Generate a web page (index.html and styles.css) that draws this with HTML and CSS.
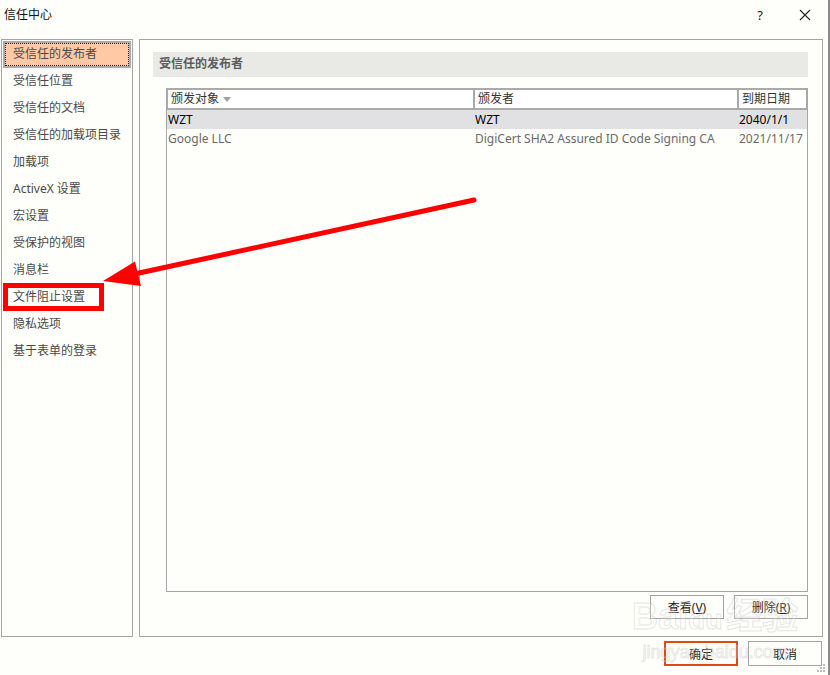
FILE: index.html
```html
<!DOCTYPE html>
<html lang="zh-CN">
<head>
    <meta charset="UTF-8">
    <meta name="viewport" content="width=device-width, initial-scale=1.0">
    <title>信任中心</title>
    <link rel="stylesheet" href="styles.css">
</head>
<body>
    <div class="window">
        <div class="titlebar">
            <span class="title">信任中心</span>
            <div class="caption-btns">
                <span class="help">?</span>
                <svg class="close" width="12" height="12" viewBox="0 0 12 12">
                    <path d="M1 1 L11 11 M11 1 L1 11" stroke="#222" stroke-width="1.1" fill="none"/>
                </svg>
            </div>
        </div>

        <div class="content">
            <nav class="nav">
                <div class="nav-item active">受信任的发布者</div>
                <div class="nav-item">受信任位置</div>
                <div class="nav-item">受信任的文档</div>
                <div class="nav-item">受信任的加载项目录</div>
                <div class="nav-item">加载项</div>
                <div class="nav-item">ActiveX 设置</div>
                <div class="nav-item">宏设置</div>
                <div class="nav-item">受保护的视图</div>
                <div class="nav-item">消息栏</div>
                <div class="nav-item">文件阻止设置</div>
                <div class="nav-item">隐私选项</div>
                <div class="nav-item">基于表单的登录</div>
            </nav>

            <section class="pane">
                <h2 class="pane-head">受信任的发布者</h2>
                <div class="cert-table">
                    <div class="cert-head">
                        <div class="th">颁发对象 <span class="caret"></span></div>
                        <div class="th">颁发者</div>
                        <div class="th">到期日期</div>
                    </div>
                    <div class="cert-row selected">
                        <div class="td">WZT</div>
                        <div class="td">WZT</div>
                        <div class="td">2040/1/1</div>
                    </div>
                    <div class="cert-row">
                        <div class="td">Google LLC</div>
                        <div class="td">DigiCert SHA2 Assured ID Code Signing CA</div>
                        <div class="td">2021/11/17</div>
                    </div>
                </div>
                <div class="pane-actions">
                    <button class="btn">查看(<u>V</u>)</button>
                    <button class="btn">删除(<u>R</u>)</button>
                </div>
            </section>
        </div>

        <div class="footer">
            <button class="btn btn-default">确定</button>
            <button class="btn">取消</button>
        </div>

        <svg class="grip" width="8" height="8" viewBox="0 0 8 8">
            <rect x="6" y="0" width="2" height="2" fill="#bbb"/>
            <rect x="3" y="3" width="2" height="2" fill="#bbb"/>
            <rect x="6" y="3" width="2" height="2" fill="#bbb"/>
            <rect x="0" y="6" width="2" height="2" fill="#bbb"/>
            <rect x="3" y="6" width="2" height="2" fill="#bbb"/>
            <rect x="6" y="6" width="2" height="2" fill="#bbb"/>
        </svg>

        <div class="watermark">
            <span class="wm-big">Bai<span class="wm-du">du</span>经验</span>
            <span class="wm-small">jingyan.baidu.com</span>
        </div>

        <!-- red annotation drawn over the dialog -->
        <svg class="annot" width="830" height="675" viewBox="0 0 830 675">
            <rect x="5.5" y="285.5" width="96" height="23" fill="none" stroke="#f00" stroke-width="5"/>
            <line x1="474" y1="200" x2="130" y2="275" stroke="#f00" stroke-width="5" stroke-linecap="round"/>
            <polygon points="103,281 135,261.5 141,286" fill="#f00"/>
        </svg>
    </div>
</body>
</html>
```

FILE: styles.css
```css
body {
    margin: 0;
    background: #fefefa;
    font-family: "Noto Sans", "Noto Sans CJK SC", sans-serif;
    font-size: 12px;
    color: #222;
}
.window {
    position: relative;
    width: 830px;
    height: 675px;
    box-sizing: border-box;
    border-right: 2px solid #8c8c8c;
    overflow: hidden;
}
.titlebar {
    display: flex;
    justify-content: space-between;
    height: 39px;
}
.title {
    padding-left: 4px;
    line-height: 30px;
    color: #111;
}
.caption-btns {
    display: flex;
    align-items: center;
    gap: 36px;
    height: 30px;
    padding-right: 17px;
}
.help {
    font-size: 13px;
    color: #222;
}
.content {
    display: flex;
    gap: 6px;
    height: 598px;
    padding-left: 1px;
}
.nav {
    width: 132px;
    box-sizing: border-box;
    border: 1px solid #a4a4a0;
    padding: 1px;
}
.nav-item {
    height: 27px;
    line-height: 26px;
    padding-left: 10px;
    color: #4a4a4a;
}
.nav-item.active {
    background: #ffc9a6;
    box-shadow: inset 0 0 0 2px #ababab;
    outline: 1px dotted #222;
    outline-offset: -3px;
}
.pane {
    width: 684px;
    box-sizing: border-box;
    border: 1px solid #a4a4a0;
    padding: 12px 14px 0 13px;
}
.pane-head {
    margin: 0;
    height: 25px;
    line-height: 24px;
    padding-left: 6px;
    background: #e9e9e6;
    font-size: 12px;
    font-weight: bold;
    color: #5c5c5c;
}
.cert-table {
    width: 642px;
    height: 504px;
    box-sizing: border-box;
    margin: 11px 0 0 13px;
    border: 1px solid #a6a6a6;
    border-top: none;
}
.cert-head {
    display: grid;
    grid-template-columns: 305px 262px 67px;
    gap: 2px;
    padding: 2px 0 2px 1px;
    background: #aaaaaa;
}
.th {
    background: #fff;
    height: 18px;
    line-height: 18px;
    padding-left: 3px;
    color: #333;
    white-space: nowrap;
    overflow: hidden;
}
.caret {
    display: inline-block;
    width: 0;
    height: 0;
    border-left: 4px solid transparent;
    border-right: 4px solid transparent;
    border-top: 5px solid #a0a0a0;
    vertical-align: middle;
    margin-left: 1px;
}
.cert-row {
    display: grid;
    grid-template-columns: 305px 262px 67px;
    gap: 2px;
    padding-left: 1px;
    height: 19px;
    line-height: 20px;
    color: #6a6a6a;
}
.cert-row.selected {
    background: #e1e0e2;
    color: #000;
}
.td {
    padding-left: 0;
    white-space: nowrap;
    overflow: hidden;
}
.pane-actions {
    display: flex;
    justify-content: flex-end;
    gap: 10px;
    margin-top: 3px;
    width: 655px;
}
.btn {
    width: 74px;
    height: 24px;
    box-sizing: border-box;
    border: 1px solid #a3a3a3;
    background: transparent;
    font-family: inherit;
    font-size: 12px;
    color: #222;
    padding: 0;
}
.footer {
    display: flex;
    justify-content: flex-end;
    gap: 10px;
    margin-top: 4px;
    padding-right: 6px;
}
.footer .btn {
    height: 25px;
}
.btn-default {
    border: 2px solid #e04818;
}
.grip {
    position: absolute;
    right: 3px;
    bottom: 3px;
}
.watermark {
    position: absolute;
    left: 632px;
    top: 596px;
    display: flex;
    flex-direction: column;
    align-items: center;
    white-space: nowrap;
    pointer-events: none;
}
.wm-big {
    font-family: "Liberation Sans", "Noto Sans CJK SC", sans-serif;
    font-size: 36px;
    font-weight: bold;
    line-height: 42px;
    color: rgba(255, 255, 255, 0.2);
    -webkit-text-stroke: 1px rgba(170, 170, 170, 0.3);
}
.wm-du {
    font-size: 28px;
    margin-right: 4px;
}
.wm-small {
    font-family: "Liberation Sans", sans-serif;
    font-size: 18px;
    line-height: 22px;
    color: rgba(255, 255, 255, 0.2);
    -webkit-text-stroke: 1px rgba(170, 170, 170, 0.28);
}
.annot {
    position: absolute;
    left: 0;
    top: 0;
    pointer-events: none;
}
```
